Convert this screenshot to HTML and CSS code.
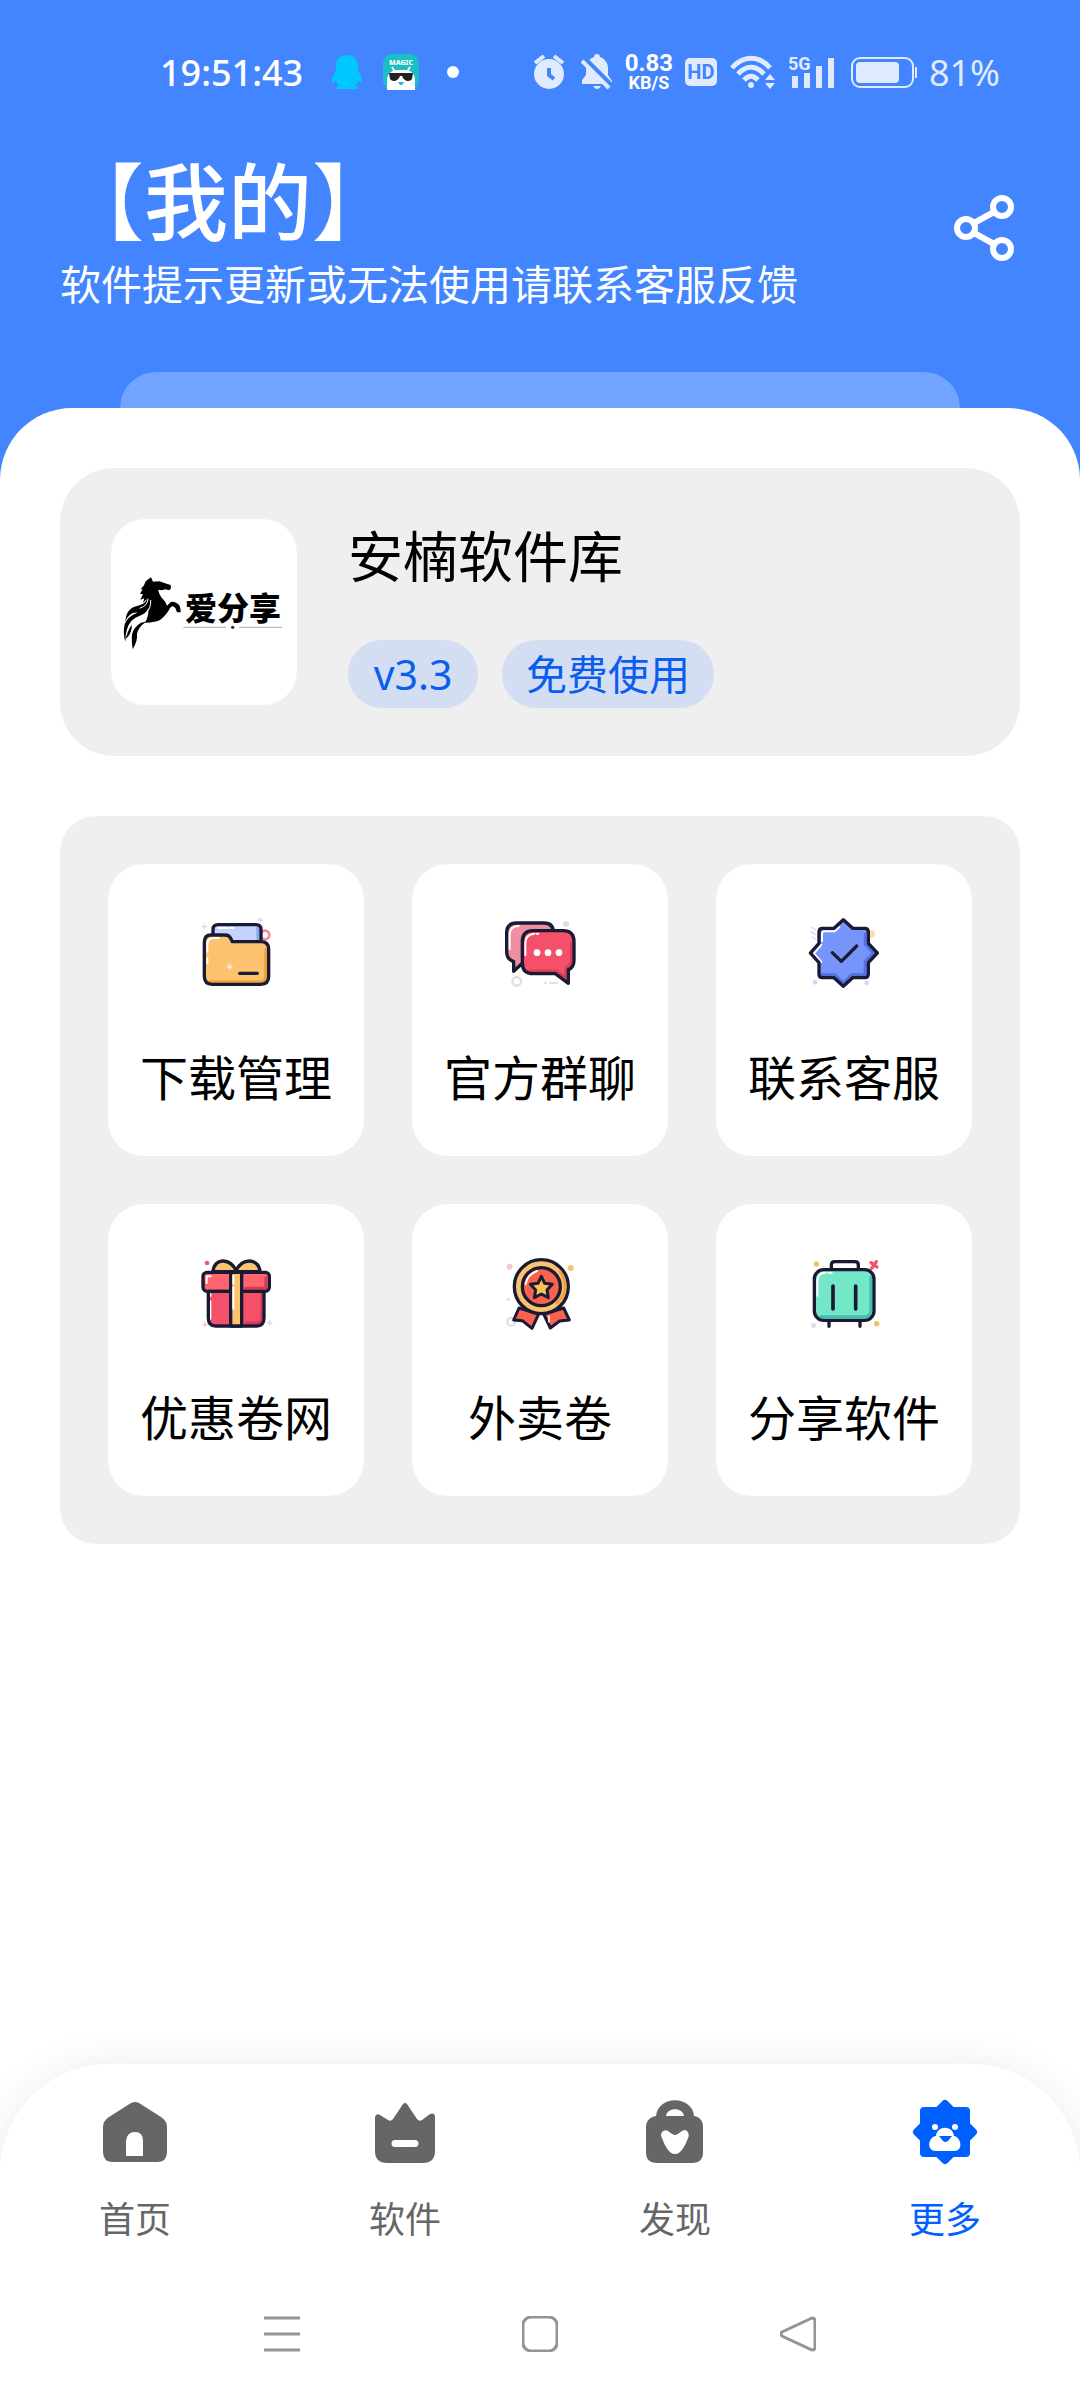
FILE: index.html
```html
<!DOCTYPE html>
<html lang="zh-CN">
  <head>
    <meta charset="utf-8">
    <meta name="viewport" content="width=device-width, initial-scale=1">
    <title>我的</title>
    <link rel="stylesheet" href="styles.css">
  </head>
  <body>
    <!-- 状态栏 -->
    <div class="status">
      <div class="status-left">
        <span class="time">19:51:43</span>
        <svg width="32" height="36" viewBox="0 0 32 36"><path fill="#00c8ff" d="M16 1C9 1 5 6 5 12v5C3 20 0 25 1 28c1 2 3 0 4-2 0 3 2 5 3 6-2 0-3 1-3 3h22c0-2-1-3-3-3 1-1 3-3 3-6 1 2 3 4 4 2 1-3-2-8-4-11v-5C27 6 23 1 16 1z"/></svg>
        <svg width="36" height="36" viewBox="0 0 36 36">
          <rect width="36" height="36" rx="9" fill="#18bfc4"/>
          <text x="18" y="11" class="magic">MAGIC</text>
          <path d="M9 13l3 5M27 13l-3 5" stroke="#fff" stroke-width="2"/>
          <path fill="#fff" d="M4 36V26c0-6 5-10 10-10h8c6 0 10 4 10 10v10z"/>
          <path fill="#222" d="M6 19h24l-1 6c-2 3-8 3-10-3h-2c-2 6-8 6-10 3z"/>
          <path fill="#18bfc4" d="M15 28h6l-2 3h-2z"/>
        </svg>
        <i class="dot"></i>
      </div>
      <div class="status-right">
        <svg width="36" height="36" viewBox="0 0 36 36">
          <circle cx="16" cy="20" r="15" fill="#e0ebff"/>
          <path d="M2 9l9-7M21 2l9 7" stroke="#e0ebff" stroke-width="4"/>
          <path d="M16 14v7l5 4" fill="none" stroke="#4285ff" stroke-width="4"/>
        </svg>
        <svg width="32" height="36" viewBox="0 0 32 36">
          <path fill="#e0ebff" d="M13 3a3 3 0 0 1 6 0c5 2 8 6 8 11v7l4 6v3H1v-4l4-5v-7C5 9 8 5 13 3zM12 32h8c-2 4-6 4-8 0z"/>
          <path d="M2 3l30 30" stroke="#4285ff" stroke-width="5"/>
          <path d="M1 7l27 27" stroke="#e0ebff" stroke-width="4"/>
        </svg>
        <div class="speed"><b>0.83</b><small>KB/S</small></div>
        <span class="hd">HD</span>
        <svg width="48" height="36" viewBox="0 0 48 36">
          <g fill="none" stroke="#e0ebff" stroke-width="5">
            <path d="M3 14c11-13 27-13 38 0"/>
            <path d="M9 20c8-9 18-9 26 0"/>
            <path d="M15 26c5-5 9-5 14 0"/>
          </g>
          <circle cx="22" cy="31" r="3" fill="#e0ebff"/>
          <path fill="#e0ebff" d="M36 26l5-6 5 6zM36 29h10l-5 6z"/>
        </svg>
        <svg width="48" height="36" viewBox="0 0 48 36">
          <text x="-1" y="16" class="net">5G</text>
          <path d="M6 22v12M18 19v15M30 12v22M42 4v30" stroke="#e0ebff" stroke-width="6"/>
        </svg>
        <svg width="68" height="36" viewBox="0 0 68 36">
          <rect x="3" y="4" width="61" height="29" rx="8" fill="none" stroke="#e0ebff" stroke-width="2"/>
          <rect x="7" y="8" width="43" height="21" rx="4" fill="#e0ebff"/>
          <path d="M67 13v11" stroke="#e0ebff" stroke-width="2"/>
        </svg>
        <span class="power">81%</span>
      </div>
    </div>

    <header class="header">
      <div>
        <h1>【我的】</h1>
        <p>软件提示更新或无法使用请联系客服反馈</p>
      </div>
      <button class="share" type="button" aria-label="分享">
        <svg width="72" height="72" viewBox="0 0 72 72" fill="none" stroke="#fff" stroke-width="6">
          <circle cx="54" cy="15" r="9"/>
          <circle cx="18" cy="36" r="9"/>
          <circle cx="54" cy="57" r="9"/>
          <path d="M26 31l20-11M26 41l20 11"/>
        </svg>
      </button>
    </header>
    <div class="peek"></div>

    <main class="sheet">
      <section class="app">
        <svg class="logo" viewBox="3 -183 558 558">
          <!-- 马 -->
          <path d="M123-8L129 5 148 4 170 11 182 15 183 25 178 31 166 28 155 31 145 29Q146 43 158 56 169 67 171 77L183 66Q194 62 205 73 212 80 212 97L201 97 196 84Q187 74 180 84 171 104 151 119 139 127 104 128 117 112 115 84 109 101 88 108 60 117 51 148 46 163 46 185 38 162 44 133 53 109 82 98 58 96 46 125 48 83 84 77 108 71 111 57L99 68 103 55 91 59 99 43 90 41 98 28 92 28 102 16 107 4z"/>
          <path d="M93 128Q70 142 66 163 64 179 68 208 84 181 81 162 84 142 108 125z"/>
          <path d="M65 134Q54 150 46 178 61 166 65 145z"/>
          <path d="M122 60Q124 87 105 101M114 56Q114 76 89 85" fill="none" stroke="#fff" stroke-width="3"/>
          <text x="369" y="119" class="logo-text">爱分享</text>
          <path d="M220 142h128M388 142h128" stroke="#aaa" stroke-width="3"/>
          <circle cx="368" cy="142" r="5" fill="#333"/>
        </svg>
        <div>
          <h2>安楠软件库</h2>
          <div class="tags">
            <span>v3.3</span>
            <span>免费使用</span>
          </div>
        </div>
      </section>

      <section class="grid">
        <button type="button">
          <svg viewBox="48 75 240 240" stroke-linecap="round" stroke-linejoin="round">
            <circle cx="255" cy="138" r="13" fill="none" stroke="#f88a9c" stroke-width="8"/>
            <path d="M67 113h12M73 107v12M235 93h12M241 87v12" stroke="#d8d8e4" stroke-width="4"/>
            <path d="M99 150v-28q0-15 15-15h114q15 0 15 15v45H99z" fill="#c4d4ff"/>
            <path d="M234 115v42" stroke="#8daaf0" stroke-width="10"/>
            <path d="M114 117h28M150 117h10" stroke="#fff" stroke-width="6"/>
            <path d="M99 135v-13q0-15 15-15h114q15 0 15 15v32" fill="none" stroke="#1b1a35" stroke-width="10"/>
            <path d="M73 160q0-22 20-22h42q12 0 17 10l5 10h85q24 0 24 22v82q0 24-24 24H97q-24 0-24-24z" fill="#fbc36e"/>
            <path d="M90 278h150q16 0 17-17v-80" fill="none" stroke="#f2a03d" stroke-width="8"/>
            <path d="M82 188v-22q0-19 20-19h14M82 208v14" fill="none" stroke="#fff" stroke-width="6"/>
            <path d="M73 160q0-22 20-22h42q12 0 17 10l5 10h85q24 0 24 22v82q0 24-24 24H97q-24 0-24-24zM179 253h53" fill="none" stroke="#1b1a35" stroke-width="10"/>
            <path d="M143 233h12M149 227v12" stroke="#ffe9dc" stroke-width="6"/>
          </svg>
          <span>下载管理</span>
        </button>
        <button type="button">
          <svg viewBox="60 75 240 240" stroke-linecap="round" stroke-linejoin="round">
            <circle cx="110" cy="277" r="13" fill="none" stroke="#dedfe9" stroke-width="7"/>
            <circle cx="258" cy="105" r="9" fill="#dedfe9"/>
            <path d="M195 282h3M210 282h22" stroke="#dedfe9" stroke-width="6"/>
            <path d="M80 132q0-30 30-30h82q28 0 28 28v92h-92l-27 25v-29q-21-8-21-30z" fill="#ef8fa2" stroke="#1b1a35" stroke-width="10"/>
            <path d="M89 180v-43q0-26 27-26" fill="none" stroke="#fff" stroke-width="6"/>
            <path d="M127 158q0-33 32-33h90q33 0 33 33v56q0 22-17 28v41l-39-29h-67q-32 0-32-32z" fill="#f4506a"/>
            <path d="M150 246h82l25 20v-30q17-6 17-24v-50" fill="none" stroke="#d93b52" stroke-width="7"/>
            <path d="M136 198v-35q0-27 27-29M170 134h5" fill="none" stroke="#fff" stroke-width="6"/>
            <path d="M127 158q0-33 32-33h90q33 0 33 33v56q0 22-17 28v41l-39-29h-67q-32 0-32-32z" fill="none" stroke="#1b1a35" stroke-width="10"/>
            <g fill="#fff"><circle cx="171" cy="191" r="10"/><circle cx="204" cy="191" r="10"/><circle cx="237" cy="191" r="10"/></g>
          </svg>
          <span>官方群聊</span>
        </button>
        <button type="button">
          <svg viewBox="42 75 240 240" stroke-linecap="round" stroke-linejoin="round">
            <circle cx="244" cy="135" r="11" fill="#ffdca5"/>
            <g fill="#cbd8fa"><circle cx="75" cy="280" r="7"/><circle cx="230" cy="282" r="7"/></g>
            <path d="M63 114l14 9M63 128l14 9M66 144l12 8" stroke="#cbd8fa" stroke-width="4"/>
            <path d="M160 92l28 26h36q11 0 11 11v34l27 29-27 29v34q0 11-11 11h-36l-28 26-28-26H97q-10 0-10-10v-35l-26-29 26-29v-34q0-11 10-11h35z" fill="#7794fa"/>
            <path d="M95 257h39l26 24 25-24h40v-39l25-26-25-27v-30" fill="none" stroke="#536fe0" stroke-width="8"/>
            <path d="M96 157v-22q0-8 8-8h30l14-13M94 167l-22 26 22 26" fill="none" stroke="#fff" stroke-width="6"/>
            <path d="M160 92l28 26h36q11 0 11 11v34l27 29-27 29v34q0 11-11 11h-36l-28 26-28-26H97q-10 0-10-10v-35l-26-29 26-29v-34q0-11 10-11h35zM127 191l27 26 46-46" fill="none" stroke="#1b1a35" stroke-width="10"/>
          </svg>
          <span>联系客服</span>
        </button>
        <button type="button">
          <svg viewBox="48 75 240 240" stroke-linecap="round" stroke-linejoin="round">
            <circle cx="81" cy="102" r="7" fill="#ee5b69"/>
            <path d="M69 287h12M75 281v12" stroke="#f6bfd0" stroke-width="4"/><path d="M263 282h12M269 276v12" stroke="#d8d8e4" stroke-width="4"/>
            <path d="M99 128c2-23 17-33 31-32 19 1 30 12 38 28 9-16 23-28 40-28 16 0 31 11 32 32z" fill="#fbc36e" stroke="#1b1a35" stroke-width="10"/>
            <path d="M85 187h167v80q0 24-22 24H107q-22 0-22-24z" fill="#f4506a"/>
            <rect x="69" y="130" width="199" height="57" rx="12" fill="#ff656e"/>
            <path d="M91 217v53M91 196v5M80 162v-20h12" fill="none" stroke="#fff" stroke-width="6"/>
            <path d="M198 281h35q12 0 12-14v-70M257 146v31h-61" fill="none" stroke="#d93b52" stroke-width="8"/>
            <path d="M85 187h167v80q0 24-22 24H107q-22 0-22-24z" fill="none" stroke="#1b1a35" stroke-width="10"/>
            <rect x="69" y="130" width="199" height="57" rx="12" fill="none" stroke="#1b1a35" stroke-width="10"/>
            <path d="M152 130h33v161h-33z" fill="#fbc36e" stroke="#1b1a35" stroke-width="10"/>
            <path d="M160 140v24M160 174v65" stroke="#fff" stroke-width="6"/>
          </svg>
          <span>优惠卷网</span>
        </button>
        <button type="button">
          <svg viewBox="60 75 240 240" stroke-linecap="round" stroke-linejoin="round">
            <circle cx="89" cy="113" r="9" fill="#f8c4e0"/><circle cx="272" cy="117" r="9" fill="#fac069"/>
            <circle cx="85" cy="211" r="5" fill="#dedfe9"/><circle cx="94" cy="278" r="12" fill="none" stroke="#dedfe9" stroke-width="7"/>
            <path d="M117 237l-16 36 26 2 29 23 20-43zM251 237l17 36-29 3-28 21-20-42z" fill="#f9624c" stroke="#1b1a35" stroke-width="9"/>
            <path d="M207 262v16" stroke="#fff" stroke-width="5"/>
            <circle cx="184" cy="173" r="81" fill="#fbc36e" stroke="#1b1a35" stroke-width="10"/>
            <path d="M240 127q35 54-9 95" fill="none" stroke="#f2a03d" stroke-width="8"/>
            <circle cx="184" cy="173" r="57" fill="#f9624c" stroke="#1b1a35" stroke-width="10"/>
            <path d="M137 165q5-29 34-39" fill="none" stroke="#fff" stroke-width="6"/>
            <path d="M184 142l10 21 23 3-16 17 4 23-21-11-21 11 4-23-16-17 23-3z" fill="#fbc34e" stroke="#1b1a35" stroke-width="9"/>
          </svg>
          <span>外卖卷</span>
        </button>
        <button type="button">
          <svg viewBox="42 75 240 240" stroke-linecap="round" stroke-linejoin="round">
            <circle cx="79" cy="105" r="8" fill="#f7c05f"/><circle cx="260" cy="284" r="8" fill="#f7c05f"/><circle cx="71" cy="289" r="8" fill="#dedfe9"/>
            <path d="M243 101l18 13M259 98l-14 20" stroke="#f4506a" stroke-width="10"/>
            <path d="M124 121v-13q0-10 10-10h61q10 0 10 10v13M117 278v14M210 278v14" fill="none" stroke="#1b1a35" stroke-width="10"/>
            <rect x="73" y="122" width="179" height="152" rx="28" fill="#73e7c8"/>
            <path d="M93 263h130q19 0 19-19v-99" fill="none" stroke="#44bfae" stroke-width="8"/>
            <path d="M82 200v-43q0-26 24-26M115 131h10" fill="none" stroke="#fff" stroke-width="6"/>
            <rect x="73" y="122" width="179" height="152" rx="28" fill="none" stroke="#1b1a35" stroke-width="10"/>
            <path d="M129 171v69M197 171v69" stroke="#1b1a35" stroke-width="11"/>
          </svg>
          <span>分享软件</span>
        </button>
      </section>
    </main>

    <!-- 底部导航 -->
    <nav class="tabbar">
      <a href="#home">
        <svg viewBox="0 0 72 72"><path fill="currentColor" fill-rule="evenodd" d="M32 7q4-2 8 0l22 14q6 4 6 10v25q0 10-10 10H14Q4 66 4 56V31q0-6 6-10zM27 60h17V45q0-9-8-9t-9 9z"/></svg>
        <span>首页</span>
      </a>
      <a href="#soft">
        <svg viewBox="0 0 72 72"><path fill="currentColor" fill-rule="evenodd" d="M6 21q1-4 5-2l8 5q3 2 5-1L34 8q2-2 4 0l10 15q2 3 5 1l8-6q5-2 5 3v34q0 12-12 12H18Q6 67 6 55zM26 44a3 3 0 0 0 0 7h20a3 3 0 0 0 0-7z"/></svg>
        <span>软件</span>
      </a>
      <a href="#find">
        <svg viewBox="0 0 72 72"><path fill="currentColor" fill-rule="evenodd" d="M17 20C19-1 53-1 55 20c6 1 9 5 9 11v25q0 11-11 11H18Q7 67 7 56V31c0-6 4-10 10-11zm10 0h18c-1-9-17-9-18 0zm9 19q-2 0-7-4-3-2-6 1-2 3 0 6c3 8 7 16 13 16s10-8 13-16q2-4-1-7-2-2-5 0-5 4-7 4z"/></svg>
        <span>发现</span>
      </a>
      <a href="#more" class="active">
        <svg viewBox="0 0 72 72">
          <path fill="currentColor" stroke="currentColor" stroke-width="8" stroke-linejoin="round" d="M36 8l7 7h14v14l7 7-7 7v14H43l-7 7-7-7H15V43l-7-7 7-7V15h14z"/>
          <g fill="#fff"><circle cx="26" cy="31" r="3"/><circle cx="46" cy="31" r="3"/><path d="M27 40c1-11 17-11 18 0 7 1 10 15 0 15H27c-10 0-8-14 0-15z"/></g>
          <path fill="currentColor" d="M30 40h13l-4 5q-3 2-5 0z"/>
        </svg>
        <span>更多</span>
      </a>
    </nav>

    <div class="sysbar">
      <button type="button" aria-label="任务"><svg viewBox="0 0 36 36"><path d="M0 2h36M0 18h36M0 34h36"/></svg></button>
      <button type="button" aria-label="主屏幕"><svg viewBox="0 0 36 36"><rect x="1" y="1" width="34" height="34" rx="8"/></svg></button>
      <button type="button" aria-label="返回"><svg viewBox="0 0 36 36"><path d="M32 2L2 16q-2 2 0 4l30 14q3 0 3-3V5q0-3-3-3z"/></svg></button>
    </div>
  </body>
</html>
```
FILE: styles.css
```css
*{
  margin: 0;
  padding: 0;
  box-sizing: border-box;
}
body{
  min-height: 100vh;
  display: flex;
  flex-direction: column;
  background: #4285ff;
  font-family: "Noto Sans", "Noto Sans CJK SC", sans-serif;
  color: #000;
}
button{
  border: none;
  background: none;
  font: inherit;
  color: inherit;
}
a{
  text-decoration: none;
}
svg{
  display: block;
  flex: none;
}

/* 状态栏 */
.status{
  height: 144px;
  padding: 0 80px 0 160px;
  display: flex;
  justify-content: space-between;
  align-items: center;
  color: #fff;
  font-size: 36px;
}
.status-left, .status-right{
  display: flex;
  align-items: center;
}
.status-left{
  gap: 20px;
}
.status-right{
  gap: 12px;
}
.time{
  font-weight: 500;
  margin-right: 8px;
}
.magic{
  font: 800 7px "Noto Sans", sans-serif;
  fill: #fff;
  text-anchor: middle;
}
.dot{
  width: 12px;
  height: 12px;
  margin-left: 8px;
  border-radius: 50%;
  background: #fff;
}
.speed{
  width: 48px;
  display: flex;
  flex-direction: column;
  align-items: center;
  font-family: "Roboto", sans-serif;
}
.speed b{
  font-size: 24px;
  line-height: 22px;
  font-weight: 700;
}
.speed small{
  font-size: 18px;
  line-height: 18px;
  font-weight: 700;
}
.hd{
  width: 32px;
  height: 28px;
  border-radius: 5px;
  background: #e0ebff;
  color: #4285ff;
  font: 700 20px/28px "Roboto", sans-serif;
  text-align: center;
}
.net{
  font: 700 18px "Roboto", sans-serif;
  fill: #e0ebff;
}
.power{
  color: #e0ebff;
}

.header{
  padding: 8px 60px 56px;
  display: flex;
  justify-content: space-between;
  color: #fff;
}
.header h1{
  font-size: 84px;
  line-height: 100px;
  font-weight: 500;
}
.header p{
  font-size: 41px;
  line-height: 64px;
}
.share{
  padding-top: 40px;
  align-self: flex-start;
}
.peek{
  height: 36px;
  margin: 0 120px;
  border-radius: 36px 36px 0 0;
  background: #71a3ff;
}

/* 白色底一直垫到导航圆角后面 */
.sheet{
  flex: 1;
  padding: 60px 60px 108px;
  margin-bottom: -108px;
  border-radius: 72px 72px 0 0;
  background: #fff;
}
.app{
  display: flex;
  align-items: flex-start;
  gap: 51px;
  padding: 51px 51px 48px;
  border-radius: 54px;
  background: #efefef;
}
.logo{
  width: 186px;
  height: 186px;
  border-radius: 34px;
  background: #fff;
}
.logo-text{
  font: 900 96px "Noto Sans CJK SC", sans-serif;
  text-anchor: middle;
}
.app h2{
  font-size: 55px;
  line-height: 73px;
  font-weight: 400;
}
.tags{
  display: flex;
  gap: 24px;
  margin-top: 48px;
}
.tags span{
  min-width: 130px;
  padding: 0 24px;
  border-radius: 34px;
  background: #d3def2;
  color: #0b5cf0;
  font-size: 41px;
  line-height: 68px;
  text-align: center;
}

.grid{
  display: grid;
  grid-template-columns: repeat(3, 1fr);
  gap: 48px;
  margin-top: 60px;
  padding: 48px;
  border-radius: 36px;
  background: #efefef;
}
.grid button{
  display: flex;
  flex-direction: column;
  align-items: center;
  gap: 48px;
  padding: 50px 0 42px;
  border-radius: 36px;
  background: #fff;
  font-size: 48px;
  line-height: 72px;
}
.grid svg{
  width: 80px;
  height: 80px;
}

/* 底部 */
.tabbar{
  position: relative;
  display: flex;
  padding: 32px 0 26px;
  border-radius: 108px 108px 0 0;
  background: #fff;
  box-shadow: 0 0 40px rgba(0,0,0,.08);
}
.tabbar a{
  flex: 1;
  display: flex;
  flex-direction: column;
  align-items: center;
  gap: 30px;
  color: #666;
  font-size: 36px;
  line-height: 44px;
}
.tabbar svg{
  width: 72px;
  height: 72px;
}
.tabbar .active{
  color: #0060ff;
}
.sysbar{
  position: relative;
  display: flex;
  justify-content: center;
  align-items: center;
  gap: 158px;
  height: 132px;
  background: #fff;
}
.sysbar button{
  width: 100px;
  height: 100px;
  display: flex;
  justify-content: center;
  align-items: center;
}
.sysbar svg{
  width: 36px;
  height: 36px;
  fill: none;
  stroke: #949494;
  stroke-width: 3;
}
```
